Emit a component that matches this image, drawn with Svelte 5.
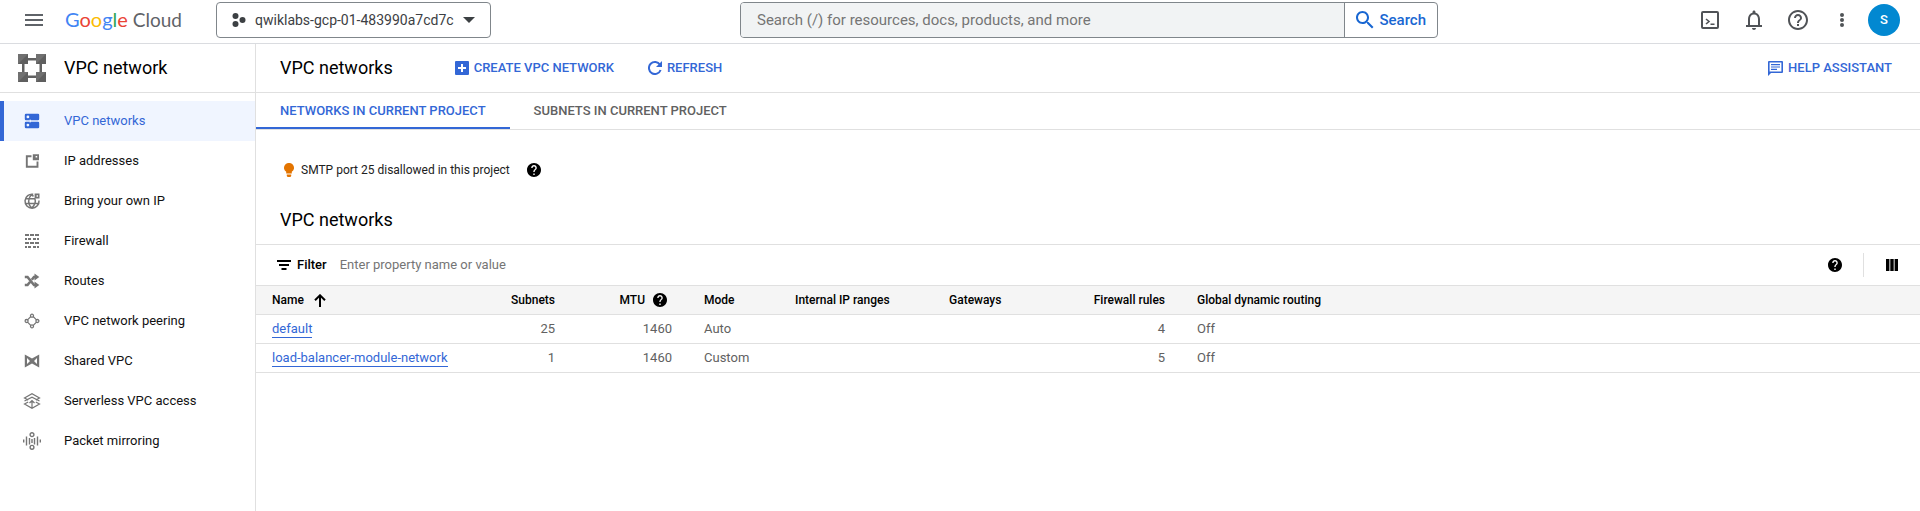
<script>
  const helpFilled =
    'M12 2C6.48 2 2 6.48 2 12s4.48 10 10 10 10-4.48 10-10S17.52 2 12 2zm1 17h-2v-2h2v2zm2.07-7.75l-.9.92C13.45 12.9 13 13.5 13 15h-2v-.5c0-1.1.45-2.1 1.17-2.83l1.24-1.26c.37-.36.59-.86.59-1.41 0-1.1-.9-2-2-2s-2 .9-2 2H8c0-2.21 1.79-4 4-4s4 1.79 4 4c0 .88-.36 1.68-.93 2.25z';

  // Each glyph is drawn on an 18 x 18 grid: "fill" is a solid shape, "line" is stroked.
  const nav = [
    {
      label: 'VPC networks',
      active: true,
      fill: 'M3 1.800H15Q16.200 1.800 16.200 3V7Q16.200 8.200 15 8.200H8L6.800 7V8.200H3Q1.800 8.200 1.800 7V3Q1.800 1.800 3 1.800ZM4.900 3.500A1.400 1.400 0 1 0 4.900 6.300A1.400 1.400 0 1 0 4.900 3.500ZM3 9.800H6.800V11L8 9.800H15Q16.200 9.800 16.200 11V15Q16.200 16.200 15 16.200H3Q1.800 16.200 1.800 15V11Q1.800 9.800 3 9.800ZM4.900 11.700A1.400 1.400 0 1 0 4.900 14.500A1.400 1.400 0 1 0 4.900 11.700Z'
    },
    {
      label: 'IP addresses',
      fill: 'M9.800 2.200H16V8.200H9.800ZM12.600 4V5.600H14.200V4Z',
      line: 'M8.500 4.200H3.800V14.800H14.500V9.500',
      width: 1.9
    },
    {
      label: 'Bring your own IP',
      fill: 'M11.600 1.600H16.500V6.500H11.600ZM13.600 3.200V4.800H15V3.200Z',
      line: 'M10.200 2.300A7 7 0 1 0 16 8.500M2.600 6.800H12.200M2.600 11.500H15.400M8.800 2.300C4.600 6.500 4.600 12 8.800 16C12.400 12.500 13 9.500 11.800 6.500M8.800 2.300L10.400 4.500',
      width: 1.5
    },
    {
      label: 'Firewall',
      fill: 'M2 2H6V4H2ZM7 2H11V4H7ZM12 2H16V4H12ZM2 6H4V8H2ZM5 6H8V8H5ZM10 6H13V8H10ZM14 6H16V8H14ZM2 10H6V12H2ZM7 10H11V12H7ZM12 10H16V12H12ZM2 14H4V16H2ZM5 14H8V16H5ZM10 14H13V16H10ZM14 14H16V16H14Z'
    },
    {
      label: 'Routes',
      fill: 'M11.500 1.500L16.300 5L11.500 8.500ZM11.500 9.500L16.300 13L11.500 16.500Z',
      line: 'M1.800 5H4.500L11 13H12.500M1.800 13H4.500L7 10M8.800 7.800L11 5H12.500',
      width: 2.6
    },
    {
      label: 'VPC network peering',
      line: 'M9 2.200A1.500 1.500 0 1 0 9 5.200A1.500 1.500 0 1 0 9 2.200ZM9 12.800A1.500 1.500 0 1 0 9 15.800A1.500 1.500 0 1 0 9 12.800ZM3.600 7.500A1.500 1.500 0 1 0 3.600 10.500A1.500 1.500 0 1 0 3.600 7.500ZM14.400 7.500A1.500 1.500 0 1 0 14.400 10.500A1.500 1.500 0 1 0 14.400 7.500ZM7.700 4.600L4.800 7.600M10.300 4.600L13.200 7.600M7.700 13.400L4.800 10.400M10.300 13.400L13.200 10.400',
      width: 1.3
    },
    {
      label: 'Shared VPC',
      fill: 'M1.800 2.500L9 6.600L16.200 2.500V15.500L9 11.400L1.800 15.500ZM4 6V12L7 9ZM14 6V12L11 9Z'
    },
    {
      label: 'Serverless VPC access',
      line: 'M5.200 8L1.500 6L9 1.800L16.500 6L12.800 8M1.500 9L9 5.200L16.500 9M5.200 10L1.500 12L9 16.200L16.500 12L12.800 10M9 8.500V16M6.500 11L9 8.500L11.500 11',
      width: 1.2
    },
    {
      label: 'Packet mirroring',
      line: 'M9 0.800A1.900 1.900 0 1 0 9 4.600A1.900 1.900 0 1 0 9 0.800ZM9 13.400A1.900 1.900 0 1 0 9 17.200A1.900 1.900 0 1 0 9 13.400ZM0.700 7.500V10.500M3.500 4.500V13.500M6.500 6V12.500M9 7V11M11.500 6V12.500M14.500 4.500V13.500M17.300 7.500V10.500',
      width: 1.4
    }
  ];

  const rows = [
    { name: 'default', subnets: 25, mtu: 1460, mode: 'Auto', rules: 4, routing: 'Off' },
    { name: 'load-balancer-module-network', subnets: 1, mtu: 1460, mode: 'Custom', rules: 5, routing: 'Off' }
  ];
</script>

{#snippet help()}
  <svg class="help" viewBox="2 2 20 20" aria-hidden="true"><path d={helpFilled} /></svg>
{/snippet}

<div class="page">
  <header class="topbar">
    <button class="icon menu" aria-label="Main menu">
      <svg width="18" height="12" viewBox="0 0 18 12"><path d="M0 0h18v2H0zM0 5h18v2H0zM0 10h18v2H0z" /></svg>
    </button>
    <a class="logo" href="#home"><span class="b">G</span><span class="r">o</span><span class="y">o</span><span class="b">g</span><span class="g">l</span><span class="r">e</span><span class="cloud">&nbsp;Cloud</span></a>
    <button class="project">
      <svg width="14" height="14" viewBox="0 0 14 14"><circle cx="3.5" cy="3" r="3" /><circle cx="3.5" cy="11" r="3" /><circle cx="10.500" cy="7" r="3" /></svg>
      <span>qwiklabs-gcp-01-483990a7cd7c</span>
      <svg width="12" height="6" viewBox="0 0 12 6"><path d="M0 0H12L6 6Z" /></svg>
    </button>
    <form class="search" role="search">
      <input type="search" aria-label="Search" placeholder="Search (/) for resources, docs, products, and more" />
      <button type="button">
        <svg width="18" height="18" viewBox="3 3 18 18"><path d="M15.5 14h-.79l-.28-.27C15.41 12.59 16 11.11 16 9.5 16 5.91 13.09 3 9.5 3S3 5.91 3 9.5 5.91 16 9.5 16c1.61 0 3.09-.59 4.23-1.57l.27.28v.79l5 4.99L20.49 19l-4.99-5zm-6 0C7.01 14 5 11.99 5 9.5S7.01 5 9.5 5 14 7.01 14 9.5 11.99 14 9.5 14z" /></svg>
        Search
      </button>
    </form>
    <div class="tools">
      <button class="icon" aria-label="Activate Cloud Shell">
        <svg width="18" height="18" viewBox="0 0 18 18" class="line"><rect x="1" y="1" width="16" height="16" rx="1" stroke-width="2" /><path d="M5 8L8 10.5L5 13M9.5 13.2H13.5" stroke-width="1.6" /></svg>
      </button>
      <button class="icon" aria-label="Notifications">
        <svg width="24" height="24" viewBox="0 0 24 24"><path d="M12 22c1.1 0 2-.9 2-2h-4c0 1.1.9 2 2 2zm6-5v-6c0-3.07-1.63-5.64-4.5-6.32V4c0-.83-.67-1.5-1.5-1.5s-1.5.67-1.5 1.5v.68C7.64 5.36 6 7.92 6 11v6H4v2h16v-2zm-2 0H8v-6c0-2.48 1.51-4.5 4-4.5s4 2.02 4 4.5z" /></svg>
      </button>
      <button class="icon" aria-label="Help">
        <svg width="24" height="24" viewBox="0 0 24 24"><path d="M11 18h2v-2h-2v2zm1-16C6.48 2 2 6.48 2 12s4.48 10 10 10 10-4.48 10-10S17.52 2 12 2zm0 18c-4.41 0-8-3.59-8-8s3.59-8 8-8 8 3.59 8 8-3.59 8-8 8zm0-14c-2.21 0-4 1.79-4 4h2c0-1.1.9-2 2-2s2 .9 2 2c0 2-3 1.75-3 5h2c0-2.25 3-2.5 3-5 0-2.21-1.79-4-4-4z" /></svg>
      </button>
      <button class="icon" aria-label="More options">
        <svg width="4" height="14" viewBox="0 0 4 14"><circle cx="2" cy="2" r="2" /><circle cx="2" cy="7" r="2" /><circle cx="2" cy="12" r="2" /></svg>
      </button>
      <button class="avatar">S</button>
    </div>
  </header>

  <div class="body">
    <aside>
      <div class="product">
        <svg width="28" height="28" viewBox="0 0 28 28" aria-hidden="true">
          <path fill="#616161" d="M9 4H19V6.500H9ZM9 21.500H19V24H9ZM4 9H6.500V19H4ZM21.500 9H24V19H21.500Z" />
          <path fill="#707070" d="M0 0H10V10H0ZM18 0H28V10H18ZM0 18H10V28H0ZM18 18H28V28H18Z" />
          <path fill="#5f5f5f" d="M0 10L10 0V10ZM18 10L28 0V10ZM0 28L10 18V28ZM18 28L28 18V28Z" />
        </svg>
        <span class="title">VPC network</span>
      </div>
      <nav>
        {#each nav as item}
          <a href="#{item.label}" class:active={item.active}>
            <svg width="18" height="18" viewBox="0 0 18 18" aria-hidden="true">
              {#if item.fill}<path d={item.fill} fill="currentColor" fill-rule="evenodd" />{/if}
              {#if item.line}<path d={item.line} fill="none" stroke="currentColor" stroke-width={item.width} />{/if}
            </svg>
            <span>{item.label}</span>
          </a>
        {/each}
      </nav>
    </aside>

    <main>
      <div class="actions">
        <h1 class="title">VPC networks</h1>
        <button class="action">
          <svg width="14" height="14" viewBox="0 0 14 14"><path fill-rule="evenodd" d="M1 0H13Q14 0 14 1V13Q14 14 13 14H1Q0 14 0 13V1Q0 0 1 0ZM6 3V6H3V8H6V11H8V8H11V6H8V3Z" /></svg>
          CREATE VPC NETWORK
        </button>
        <button class="action">
          <svg width="14" height="14" viewBox="0 0 14 14"><path class="ring" d="M12 3.8A6 6 0 1 0 12.6 9" /><path d="M14 0V6H8Z" /></svg>
          REFRESH
        </button>
        <button class="action assist">
          <svg width="15" height="15" viewBox="0 0 15 15"><path fill-rule="evenodd" d="M1 0H14Q15 0 15 1V11Q15 12 14 12H3L0 15V1Q0 0 1 0ZM1.6 1.6V10.5H13.4V1.6ZM3 3H12V4.2H3ZM3 5.4H12V6.6H3ZM3 7.8H9V9H3Z" /></svg>
          HELP ASSISTANT
        </button>
      </div>

      <div class="tabs" role="tablist">
        <button role="tab" aria-selected="true">NETWORKS IN CURRENT PROJECT</button>
        <button role="tab" aria-selected="false">SUBNETS IN CURRENT PROJECT</button>
      </div>

      <p class="notice">
        <svg width="10" height="14" viewBox="0 0 10 14" aria-hidden="true"><path fill="#e37400" d="M5 0A4.8 4.8 0 0 1 7.8 8.8V10.6H2.2V8.8A4.8 4.8 0 0 1 5 0ZM2.8 11.6H7.2V13L6.4 14H3.6L2.8 13Z" /></svg>
        <span>SMTP port 25 disallowed in this project</span>
        {@render help()}
      </p>

      <h2 class="title">VPC networks</h2>

      <div class="filter">
        <svg width="14" height="10" viewBox="0 0 14 10" aria-hidden="true"><path d="M0 0H14V2H0ZM2 4H12V6H2ZM4.500 8H9.500V10H4.500Z" /></svg>
        <label for="filter">Filter</label>
        <input id="filter" type="text" placeholder="Enter property name or value" />
        <button class="icon" aria-label="Filter help">{@render help()}</button>
        <span class="rule"></span>
        <button class="icon" aria-label="Column display options">
          <svg width="12" height="12" viewBox="0 0 12 12"><path d="M0 0H3.400V12H0ZM4.300 0H7.700V12H4.300ZM8.600 0H12V12H8.600Z" /></svg>
        </button>
      </div>

      <table>
        <colgroup>
          <col class="c-name" /><col class="c-subnets" /><col class="c-mtu" /><col class="c-mode" />
          <col class="c-ranges" /><col class="c-gateways" /><col class="c-rules" /><col />
        </colgroup>
        <thead>
          <tr>
            <th><span class="head">Name <svg class="sort" width="12" height="13" viewBox="0 0 12 13" aria-hidden="true"><path d="M6 13V1.500M1 6.300L6 1.300L11 6.300" /></svg></span></th>
            <th class="num">Subnets</th>
            <th class="num"><span class="head mtu">MTU {@render help()}</span></th>
            <th>Mode</th>
            <th>Internal IP ranges</th>
            <th>Gateways</th>
            <th class="num">Firewall rules</th>
            <th>Global dynamic routing</th>
          </tr>
        </thead>
        <tbody>
          {#each rows as row}
            <tr>
              <td><a href="#{row.name}">{row.name}</a></td>
              <td class="num">{row.subnets}</td>
              <td class="num">{row.mtu}</td>
              <td>{row.mode}</td>
              <td></td>
              <td></td>
              <td class="num">{row.rules}</td>
              <td>{row.routing}</td>
            </tr>
          {/each}
        </tbody>
      </table>
    </main>
  </div>
</div>

<style>
  * {
    box-sizing: border-box;
  }
  .page {
    display: flex;
    flex-direction: column;
    min-height: 100vh;
    background: #fff;
    color: #000;
    font: 13px/20px Roboto, "Liberation Sans", sans-serif;
  }
  button,
  input {
    margin: 0;
    padding: 0;
    border: 0;
    background: none;
    color: inherit;
    font: inherit;
    outline: none;
  }
  button {
    cursor: pointer;
  }
  svg {
    display: block;
    flex: none;
    fill: currentColor;
  }
  .help {
    width: 14px;
    height: 14px;
    color: #000;
  }
  .icon {
    display: flex;
    align-items: center;
    justify-content: center;
  }
  .title {
    margin: 0;
    font-size: 18px;
    font-weight: 400;
    line-height: 24px;
  }

  .topbar {
    display: flex;
    align-items: center;
    height: 44px;
    padding: 0 20px 4px 25px;
    border-bottom: 1px solid #dadce0;
    color: #3c4043;
  }
  .menu {
    color: #5f6368;
  }
  .logo {
    flex: 0 0 173px;
    padding-left: 22px;
    color: #5f6368;
    font: 20px/24px Lato, sans-serif;
    text-decoration: none;
    white-space: nowrap;
  }
  .cloud {
    font-size: 19px;
  }
  .b { color: #4285f4; }
  .r { color: #ea4335; }
  .y { color: #fbbc04; }
  .g { color: #34a853; }
  .project {
    display: flex;
    align-items: center;
    flex: 0 0 275px;
    height: 36px;
    padding: 0 15px;
    border: 1px solid #80868b;
    border-radius: 4px;
    font-size: 14px;
    white-space: nowrap;
  }
  .project span {
    flex: 1;
    padding-left: 9px;
    text-align: left;
  }
  .search {
    display: flex;
    flex: 0 1 698px;
    height: 36px;
    margin: 0 auto 0 249px;
    overflow: hidden;
    border: 1px solid #80868b;
    border-radius: 4px;
    font-size: 15px;
  }
  .search input {
    flex: 1;
    min-width: 0;
    padding: 0 16px;
    background: #f1f3f4;
  }
  .search input::placeholder {
    color: #757575;
    opacity: 1;
  }
  .search button {
    display: flex;
    align-items: center;
    gap: 5px;
    padding: 0 11px;
    border-left: 1px solid #80868b;
    color: #1967d2;
    font-weight: 500;
  }
  .tools {
    display: flex;
    align-items: center;
    color: #505357;
  }
  .tools .icon {
    width: 44px;
    height: 36px;
  }
  .line {
    fill: none;
    stroke: currentColor;
  }
  .avatar {
    width: 32px;
    height: 32px;
    margin-left: 4px;
    border-radius: 50%;
    background: #0288d1;
    color: #fff;
    font-weight: 500;
  }

  .body {
    display: flex;
    flex: 1;
  }
  aside {
    flex: 0 0 256px;
    border-right: 1px solid #e0e0e0;
  }
  .product {
    display: flex;
    align-items: center;
    gap: 18px;
    height: 49px;
    padding-left: 18px;
    border-bottom: 1px solid #e0e0e0;
  }
  nav {
    padding-top: 8px;
  }
  nav a {
    display: flex;
    align-items: center;
    gap: 23px;
    height: 40px;
    padding-left: 19px;
    border-left: 4px solid transparent;
    color: #111;
    text-decoration: none;
  }
  nav a svg {
    color: #757575;
  }
  nav a.active {
    border-color: #3367d6;
    background: #f0f5ff;
    color: #3367d6;
  }
  nav a.active svg {
    color: #3367d6;
  }

  main {
    flex: 1;
    min-width: 0;
  }
  .actions {
    display: flex;
    align-items: center;
    gap: 34px;
    height: 49px;
    padding: 0 28px 0 24px;
    border-bottom: 1px solid #e0e0e0;
  }
  h1.title {
    margin-right: 28px;
  }
  .action {
    display: flex;
    align-items: center;
    gap: 5px;
    color: #3367d6;
    font-weight: 500;
    white-space: nowrap;
  }
  .assist {
    margin-left: auto;
  }
  .ring {
    fill: none;
    stroke: currentColor;
    stroke-width: 2;
  }
  .tabs {
    display: flex;
    height: 37px;
    border-bottom: 1px solid #e0e0e0;
  }
  .tabs button {
    padding: 2px 24px 0;
    border-bottom: 2px solid transparent;
    color: #616161;
    font-weight: 500;
  }
  .tabs button[aria-selected='true'] {
    border-color: #3367d6;
    color: #3367d6;
  }
  .notice {
    display: flex;
    align-items: center;
    gap: 7px;
    margin: 30px 0 28px 28px;
    color: #212121;
    font-size: 12px;
  }
  .notice .help {
    margin-left: 10px;
  }
  h2.title {
    padding: 0 24px 12px;
  }
  .filter {
    display: flex;
    align-items: center;
    height: 41px;
    padding: 0 22px 0 21px;
    border-top: 1px solid #e0e0e0;
  }
  .filter label {
    padding: 0 13px 0 6px;
    font-weight: 500;
  }
  .filter input {
    flex: 1;
    min-width: 0;
  }
  .filter input::placeholder {
    color: #757575;
    opacity: 1;
  }
  .rule {
    width: 1px;
    height: 24px;
    margin: 0 22px 0 21px;
    background: #e0e0e0;
  }

  table {
    width: 100%;
    border-collapse: collapse;
    table-layout: fixed;
  }
  .c-name { width: 224px; }
  .c-subnets { width: 91px; }
  .c-mtu { width: 117px; }
  .c-mode { width: 91px; }
  .c-ranges { width: 154px; }
  .c-gateways { width: 144px; }
  .c-rules { width: 104px; }
  tr {
    height: 29px;
    border-bottom: 1px solid #e0e0e0;
  }
  thead tr {
    border-top: 1px solid #e0e0e0;
    background: #f5f5f5;
  }
  th,
  td {
    padding: 0 16px;
    text-align: left;
    white-space: nowrap;
  }
  th {
    font-size: 12px;
    font-weight: 500;
  }
  td {
    color: #616161;
  }
  .num {
    text-align: right;
  }
  .head {
    display: inline-flex;
    align-items: center;
    gap: 10px;
    vertical-align: middle;
  }
  .mtu {
    gap: 8px;
    padding-right: 5px;
  }
  .sort {
    fill: none;
    stroke: #000;
    stroke-width: 2;
  }
  td a {
    padding-bottom: 1px;
    border-bottom: 1px solid #3367d6;
    color: #3367d6;
    text-decoration: none;
  }
</style>
